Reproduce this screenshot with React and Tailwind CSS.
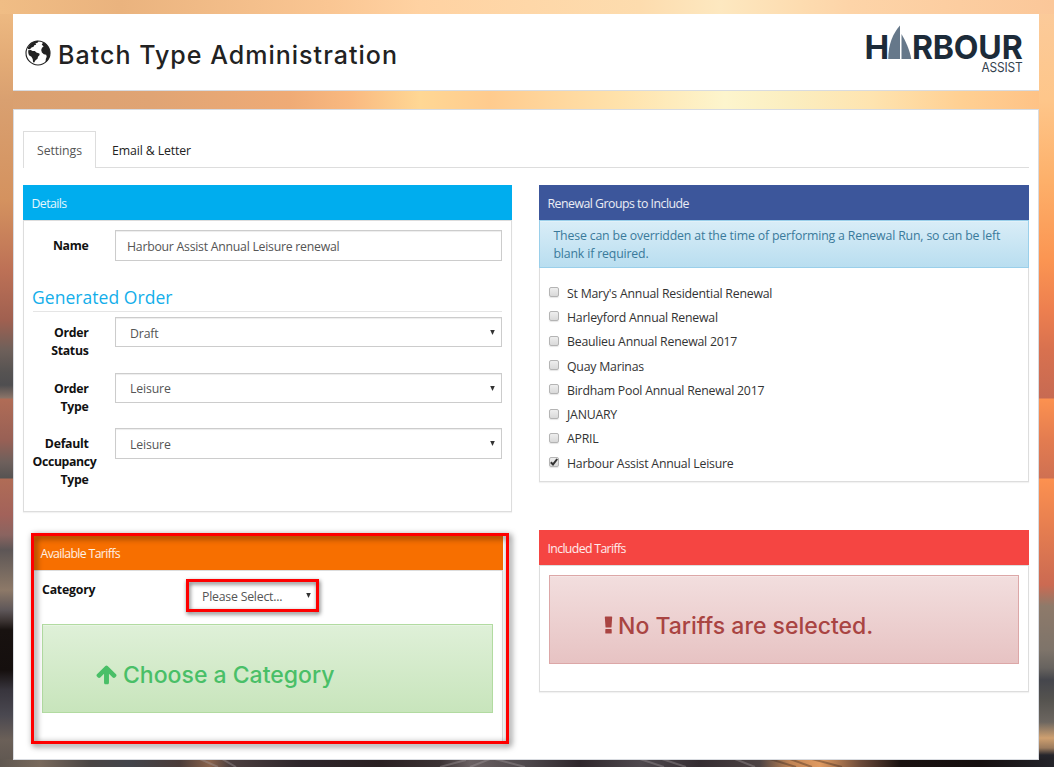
import React from 'react';

const GROUPS = [
  { name: "St Mary's Annual Residential Renewal" },
  { name: 'Harleyford Annual Renewal' },
  { name: 'Beaulieu Annual Renewal 2017' },
  { name: 'Quay Marinas' },
  { name: 'Birdham Pool Annual Renewal 2017' },
  { name: 'JANUARY' },
  { name: 'APRIL' },
  { name: 'Harbour Assist Annual Leisure', checked: true },
];

const LEFT_SKY = [
  [0, '#f0bd85'], [60, '#e3ab76'], [100, '#d9a070'], [200, '#d4925f'], [270, '#bd7156'], [320, '#a06050'],
  [350, '#6e605a'], [372, '#565352'], [385, '#4f4e50'], [398, '#8b7468'],
  [399, '#b06c56'], [440, '#986055'], [462, '#6e605c'], [478, '#565352'],
  [479, '#b06c56'], [515, '#a2625a'], [535, '#8a6460'], [550, '#5d5656'], [570, '#75685f'], [590, '#8d7968'],
  [610, '#5e5759'], [621, '#3c3433'], [630, '#181210'], [670, '#150f0e'], [690, '#38353d'], [715, '#4a4850'],
  [740, '#6b6058'], [767, '#5d554f'],
];
const RIGHT_SKY = [
  [0, '#fbcb9c'], [100, '#fec68a'], [180, '#fdb06a'], [260, '#fb9552'], [310, '#ed7f4f'], [350, '#d8714f'], [398, '#c76a52'],
  [399, '#fc9150'], [440, '#e37c50'], [478, '#cf7052'],
  [479, '#fc9150'], [530, '#e57d50'], [585, '#cb6a52'], [606, '#8e7a6a'], [650, '#7e746a'], [668, '#67635f'],
  [680, '#45464c'], [700, '#55534f'], [722, '#6c6660'], [738, '#cfa070'], [748, '#9a7a5d'], [755, '#26262c'], [767, '#1c1a1e'],
];
const TOP_SKY = [
  [0, '#f0bd85'], [120, '#eab37e'], [330, '#fac693'], [420, '#ffd2a2'], [640, '#fddcae'], [720, '#fde8c0'], [800, '#fddcb0'], [850, '#fdd4a8'], [1054, '#fbc799'],
];
const MID_SKY = [
  [0, '#d9a070'], [150, '#e0a474'], [290, '#efab76'], [350, '#f9b980'], [420, '#ffd794'], [490, '#ffcb8e'], [620, '#ffe2ab'],
  [725, '#fdf5cd'], [790, '#fbeec0'], [870, '#fee4b0'], [960, '#ffd093'], [1054, '#fec084'],
];
const WATER = [
  [0, '#5f5750'], [40, '#78695c'], [90, '#4a4544'], [130, '#43454b'], [180, '#4b3c39'], [210, '#8a634c'], [230, '#4c3f3f'], [300, '#2e262b'],
  [380, '#2a2022'], [440, '#3b3234'], [470, '#6a6062'], [530, '#4c464a'], [580, '#2e262b'], [640, '#4f494e'], [700, '#342c31'],
  [760, '#4d4343'], [790, '#c08455'], [820, '#e09a60'], [860, '#6d4b3a'], [900, '#1a1210'], [980, '#150f0f'], [1054, '#24242a'],
];

function Gradient({ id, stops, length, vertical }) {
  return (
    <linearGradient id={id} gradientUnits="userSpaceOnUse" x1="0" y1="0" x2={vertical ? 0 : length} y2={vertical ? length : 0}>
      {stops.map(([at, color]) => <stop key={at} offset={at / length} stopColor={color} />)}
    </linearGradient>
  );
}

function SunsetBackdrop() {
  return (
    <svg className="absolute inset-0 h-[767px] w-[1054px]" viewBox="0 0 1054 767" aria-hidden="true">
      <defs>
        <Gradient id="left" stops={LEFT_SKY} length={767} vertical />
        <Gradient id="right" stops={RIGHT_SKY} length={767} vertical />
        <Gradient id="top" stops={TOP_SKY} length={1054} />
        <Gradient id="mid" stops={MID_SKY} length={1054} />
        <Gradient id="water" stops={WATER} length={1054} />
      </defs>
      <rect width="530" height="767" fill="url(#left)" />
      <rect x="530" width="524" height="767" fill="url(#right)" />
      <rect width="1054" height="14" fill="url(#top)" />
      <rect x="13" y="90" width="1026" height="20" fill="url(#mid)" />
      <rect y="759" width="1054" height="8" fill="url(#water)" />
      <g strokeWidth="2" opacity="0.35" fill="none">
        <path d="M200 759l18 8M222 759l14 8M440 767l26-7M470 767l20-8M495 759l30 8M640 759l24 8M662 759l24 8M735 759l20 8" stroke="#a8a0a4" />
        <path d="M770 759l26 8M790 759l22 8M812 759l30 8" stroke="#2c1c16" />
      </g>
    </svg>
  );
}

function Globe() {
  return (
    <svg className="mb-[3px] h-[26px] w-[26px] shrink-0" viewBox="0 0 26 26" fill="#222">
      <circle cx="13" cy="13" r="12" fill="none" stroke="#222" strokeWidth="1.1" />
      <path d="M3 7.5C5 3.6 8.300 1.300 12.200.8l1.500.5-1.200 1.500-2.100.7.8 1.200-2 .6-.6 1.500-2.100.6-1.500 1.900-2-.3z" />
      <path d="M3.200 10.300l2.600-.4 1.700 1 2.300.2 1.600 1.400 3 .9.2 1.500-1.600 1.900-.5 2-2 1.500-1.300 2.100-1.100-.2-.4-3.200-1.300-2.200-2.400-1.600-.7-2.300z" />
      <path d="M17.400 1.900c4.500 1.700 7.700 6 7.700 11.100 0 4-1.900 7.200-4.600 9.400l.3-3.300.9-2.300-.5-2.100-2.400-.5-1.900-1.700-.7-2.500.8-2.200 1.600-1.400-1.900-1.800.9-1.200z" />
    </svg>
  );
}

function Logo() {
  return (
    <svg className="h-[52px] w-[162px] shrink-0 overflow-visible" viewBox="0 0 162 52" fontFamily="Inter, sans-serif">
      <g fill="#1c2b39" fontSize="33" fontWeight="700">
        <text x="0.5" y="33.500" textLength="24.500" lengthAdjust="spacingAndGlyphs">H</text>
        <text x="48" y="33.500" textLength="110.500" lengthAdjust="spacingAndGlyphs">RBOUR</text>
      </g>
      <path d="M36 .5c-7 8-11.600 18-11.800 33.500H36z" fill="#66788a" />
      <path d="M37.500 9c3.500 6 8 15 9.800 25h-9.800z" fill="#66788a" />
      <text x="117.500" y="47" fontSize="13.500" fill="#34424f" textLength="41" lengthAdjust="spacingAndGlyphs">ASSIST</text>
    </svg>
  );
}

function Panel({ title, head, className = '', children }) {
  return (
    <section className={`flex flex-col ${className}`}>
      <h3 className={`h-[35px] shrink-0 pl-[8.5px] pt-px text-[12.3px] leading-[35px] text-white/90 ${head}`}>{title}</h3>
      {children}
    </section>
  );
}

function Arrow({ className = '' }) {
  return (
    <svg className={`h-[5px] w-[5px] ${className}`} viewBox="0 0 5 5" fill="#333"><path d="M.2 0h4.600L2.500 5z" /></svg>
  );
}

function SelectBox({ value, className = '' }) {
  return (
    <div className={`flex w-[387px] items-center justify-between border border-[#ccc] bg-white pl-[14px] pr-[6px] shadow-[inset_0_1px_1px_rgba(0,0,0,0.075)] ${className}`}>
      <span className="pt-[2px] tracking-[-0.15px] text-[#555]">{value}</span>
      <Arrow />
    </div>
  );
}

function Label({ children }) {
  return <div className="w-[55.500px] shrink-0 whitespace-pre text-right font-bold leading-[18px] tracking-[-0.3px] text-[#111]">{children}</div>;
}

function Check({ checked }) {
  return (
    <span className="flex h-[10px] w-[10px] shrink-0 items-center justify-center rounded-[2px] border border-[#b4b4b4] bg-linear-to-b from-[#eee] to-[#d9d9d9] shadow-[0_1px_1px_rgba(0,0,0,0.1)]">
      {checked && (
        <svg className="h-[8px] w-[8px] shrink-0" viewBox="0 0 8 8" fill="none" stroke="#333" strokeWidth="2"><path d="M.8 4.200l2.200 2.200L7.200 1" /></svg>
      )}
    </span>
  );
}

export default function App() {
  return (
    <div className="relative h-[767px] w-[1054px] overflow-hidden font-['Open_Sans','Noto_Sans',sans-serif] text-[12.3px] leading-[18px] tracking-[-0.2px] text-[#333]">
      <SunsetBackdrop />
      <div className="relative flex flex-col gap-[18px] pl-[13px] pr-[15px] pt-[14px]">
        <header className="flex h-[77px] items-start justify-between border-b border-[#d8dbe0] bg-white pl-3 pr-[13px]">
          <h1 className="mt-[22px] flex h-[36px] items-center gap-[7px] font-['Inter',sans-serif] text-[25px] font-medium leading-[36px] tracking-[1.02px] text-[#222]">
            <Globe />
            <span className="pt-[2px]">Batch Type Administration</span>
          </h1>
          <div className="mt-[11px]"><Logo /></div>
        </header>

        <main className="flex h-[651px] flex-col border border-[#d8dbe0] bg-white px-[9px] pt-[21px]">
          <nav className="flex h-[37px] shrink-0 items-end border-b border-[#ddd]">
            <span className="-mb-px h-[37px] w-[73px] border border-b-0 border-[#ddd] bg-white text-center leading-[38px] tracking-[-0.1px] text-[#555]">Settings</span>
            <span className="ml-4 h-[36px] leading-[40px] tracking-[-0.12px] text-[#222]">Email &amp; Letter</span>
          </nav>

          <div className="mt-[17px] flex items-start justify-between">
            <div className="flex w-[489px] flex-col">
              <Panel title="Details" head="bg-[#00adee] tracking-[-0.6px]" className="h-[327px]">
                <div className="flex grow flex-col border border-[#ddd] px-[9px] shadow-[0_1px_1px_rgba(0,0,0,0.05)]">
                  <div className="mt-[9px] flex h-[31px] justify-between">
                    <div className="pt-[7px]"><Label>Name</Label></div>
                    <div className="flex w-[387px] items-center border border-[#ccc] pl-[11px] pt-[2px] tracking-[-0.26px] text-[#555] shadow-[inset_0_1px_1px_rgba(0,0,0,0.075)]">Harbour Assist Annual Leisure renewal</div>
                  </div>
                  <h4 className="mt-[23px] h-[28px] border-b border-[#e5e5e5] text-[17.500px] leading-[27px] tracking-[0.05px] text-[#13aeea]"><span className="-ml-px">Generated Order</span></h4>
                  <div className="mt-[5px] flex h-[56px] justify-between">
                    <div className="pt-[7px]"><Label>{'Order\nStatus'}</Label></div>
                    <SelectBox value="Draft" className="h-[30px] pt-px" />
                  </div>
                  <div className="flex h-[55px] justify-between">
                    <div className="pt-[7px]"><Label>{'Order\nType'}</Label></div>
                    <SelectBox value="Leisure" className="h-[30px]" />
                  </div>
                  <div className="flex justify-between">
                    <div className="pt-[7px]">
                      <Label>Default</Label>
                      <div className="-ml-[0.5px] h-[18px] font-bold tracking-[-0.35px] text-[#111]">Occupancy</div>
                      <Label>Type</Label>
                    </div>
                    <SelectBox value="Leisure" className="h-[31px]" />
                  </div>
                </div>
              </Panel>

              <div className="relative mt-[23px] pl-[9px] pr-[9px]">
                <Panel title="Available Tariffs" head="bg-[#f76f00] tracking-[-0.65px]" className="h-[207px]">
                  <div className="flex grow flex-col border border-[#ddd] px-[9px] shadow-[0_1px_1px_rgba(0,0,0,0.05)]">
                    <div className="flex h-[53px] pt-[8px]">
                      <div className="w-[144px] pt-[2px] font-bold tracking-[-0.2px] text-[#111]">Category</div>
                      <div className="relative flex h-[33px] w-[133px] items-center justify-between pl-[16px] pr-[8px]">
                        <span className="pt-[2px] tracking-[-0.22px] text-[#555]">Please Select...</span>
                        <Arrow />
                        <div className="absolute inset-0 border-[3px] border-[#fe0000] drop-shadow-[1px_2px_2px_rgba(0,0,0,0.6)]" />
                      </div>
                    </div>
                    <div className="flex h-[89px] items-center border border-[#b2dba1] bg-linear-to-b from-[#dff0d8] to-[#c8e5bc] pl-[52px] pt-[12px] font-['Inter',sans-serif] text-[23px] font-medium tracking-[0px] text-[#49bf67] shadow-[inset_0_1px_0_rgba(255,255,255,0.25)]">
                      <svg className="mr-[5px] h-[23px] w-[23px] shrink-0" viewBox="0 0 1792 1792" fill="#49bf67">
                        <path d="M1675 971q0 51-37 90l-75 75q-38 38-91 38-54 0-90-38l-294-293v704q0 52-37.500 84.500t-90.500 32.500h-128q-53 0-90.500-32.500t-37.500-84.500v-704l-294 293q-36 38-90 38t-90-38l-75-75q-38-38-38-90 0-53 38-91l651-651q35-37 90-37 54 0 91 37l651 651q37 39 37 91z" />
                      </svg>
                      Choose a Category
                    </div>
                  </div>
                </Panel>
                <div className="absolute -top-[2px] left-[8px] h-[211px] w-[478px] border-[3px] border-[#fe0000] drop-shadow-[2px_2px_3px_rgba(0,0,0,0.65)]" />
              </div>
            </div>

            <div className="flex w-[490px] flex-col">
              <Panel title="Renewal Groups to Include" head="bg-[#3c569b] tracking-[-0.5px]" className="h-[297px]">
                <div className="h-[48px] shrink-0 border border-[#9acfea] bg-linear-to-b from-[#d9edf7] to-[#b9def0] pl-[13.500px] pt-[6px] tracking-[-0.16px] text-[#3a7a9b] shadow-[inset_0_1px_0_rgba(255,255,255,0.25)]">
                  These can be overridden at the time of performing a Renewal Run, so can be left<br />blank if required.
                </div>
                <div className="grow border border-t-0 border-[#ddd] pl-[9px] pt-[12px] shadow-[0_1px_1px_rgba(0,0,0,0.05)]">
                  {GROUPS.map((g) => (
                    <div key={g.name} className="flex h-[24.300px] items-center gap-2">
                      <Check checked={g.checked} />
                      <span className="pt-[3px] tracking-[-0.22px]">{g.name}</span>
                    </div>
                  ))}
                </div>
              </Panel>

              <Panel title="Included Tariffs" head="bg-[#f54542] tracking-[-0.65px]" className="mt-[48px] h-[162px]">
                <div className="grow border border-[#ddd] px-[9px] pt-[9px] shadow-[0_1px_1px_rgba(0,0,0,0.05)]">
                  <div className="flex h-[89px] items-center border border-[#dca7a7] bg-linear-to-b from-[#f2dede] to-[#e7c3c3] pl-[54px] pt-[12px] font-['Inter',sans-serif] text-[23px] font-medium tracking-[0px] text-[#a94442] shadow-[inset_0_1px_0_rgba(255,255,255,0.25)]">
                    <svg className="mb-px mr-[5px] h-[18px] w-[9px] shrink-0" viewBox="0 0 9 18" fill="#a94442">
                      <path d="M.8 1q0-.6.7-.6h6q.7 0 .7.6l-.7 9.900q0 .6-.7.600H2.200q-.7 0-.7-.6zM1.300 13.600q0-.6.600-.6h5.200q.6 0 .6.600v3.300q0 .6-.6.600H1.900q-.6 0-.6-.6z" />
                    </svg>
                    No Tariffs are selected.
                  </div>
                </div>
              </Panel>
            </div>
          </div>
        </main>
      </div>
    </div>
  );
}
